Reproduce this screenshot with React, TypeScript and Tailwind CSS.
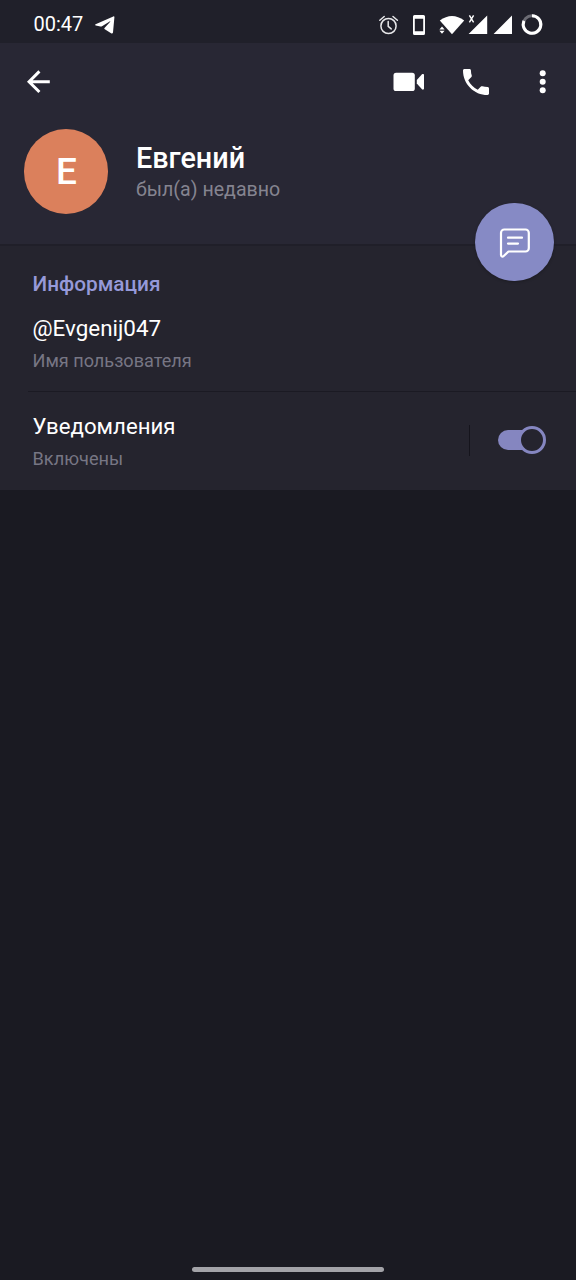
import { useState } from 'react';


/* 
  Icons
*/
function StatusIcons() {
  return (
    <svg width="170" height="24" viewBox="376 12 170 24" fill="none" className="block">
      {/* Alarm */}
      <g stroke="#e8e8ea" strokeWidth="1.5" strokeLinecap="round">
        <circle cx="388.5" cy="26" r="7.6" />
        <path d="M388.2 21.5v4.8l3 2.6M379.8 20.2l4.4-3.700M397.4 20.2l-4.4-3.700" />
      </g>

      {/* Phone */}
      <path fill="#fff" fillRule="evenodd" d="M414.500 15h9a1.500 1.500 0 0 1 1.500 1.500v17a1.500 1.500 0 0 1-1.500 1.500h-9a1.500 1.500 0 0 1-1.500-1.500v-17a1.500 1.500 0 0 1 1.500-1.500zM414.800 18.700v12.600h8.400V18.700z" />

      {/* Wifi */}
      <path fill="#fff" d="M439.800 20.600Q452 11.500 464.200 20.600L452 34.300z" />
      <path fill="#fff" stroke="#20202a" strokeWidth="1" paintOrder="stroke" d="M439.400 29.500l2.600-3 2.600 3zM439.400 30.800l2.600 3 2.600-3z" />

      {/* Signal */}
      <path stroke="#fff" strokeWidth="1.400" d="M469.400 15.300l4.200 7M473.600 15.300l-4.200 7" />
      <path fill="#fff" d="M487.200 15.500V34H468.600zM512 15.500V34H493.600z" />

      {/* Battery */}
      <circle cx="532" cy="24.500" r="8.800" stroke="#6c6c74" strokeWidth="3" />
      <path stroke="#fff" strokeWidth="3" d="M532 15.700A8.800 8.800 0 1 1 524 20.900" />
    </svg>
  )
}

function PlaneIcon() {
  return (
    <svg width="20" height="18" viewBox="0 0 20 18" fill="#fff" className="block mt-px">
      <path d="M.6 8.200 18.300.4c.7-.3 1.200.1 1.100.9L18 16.400c-.2 1.100-1 1.500-1.900.9l-6.300-4c-.7-.5-.7-1-.1-1.600l5.500-6c.3-.4-.1-.6-.5-.3L7 10.200c-.5.300-1 .4-1.600.2L.8 9.500c-.8-.3-.9-.9-.2-1.300z" />
    </svg>
  )
}

function BackIcon() {
  return (
    <svg width="24" height="24" viewBox="0 0 24 24" fill="none" stroke="#fff" strokeWidth="3" className="block">
      <path d="M23.800 11.700H3.100M13.400 1.400 3.100 11.700l10.300 10.300" />
    </svg>
  )
}

function VideoIcon() {
  return (
    <svg width="32" height="20" viewBox="0 0 32 20" fill="#fff" className="block">
      <rect x=".5" y=".8" width="21.300" height="18.200" rx="2.600" />
      <path d="M23.800 8 29 2.300c.7-.7 2-.4 2 .7v13.600c0 1.100-1.300 1.400-2 .7l-5.200-5.700z" />
    </svg>
  )
}

function PhoneIcon() {
  return (
    <svg width="26" height="26" viewBox="3 3 18 18" fill="#fff" className="block">
      <path d="M6.620 10.790c1.440 2.830 3.760 5.140 6.590 6.590l2.200-2.200c.27-.27.67-.36 1.020-.24 1.120.37 2.330.57 3.570.57.55 0 1 .45 1 1V20c0 .55-.45 1-1 1-9.390 0-17-7.610-17-17 0-.55.45-1 1-1h3.500c.55 0 1 .45 1 1 0 1.250.2 2.450.57 3.570.11.35.03.74-.25 1.020z" />
    </svg>
  )
}

function DotsIcon() {
  return (
    <svg width="8" height="26" viewBox="0 0 8 26" fill="#fff" className="block">
      <circle cx="3.700" cy="4.300" r="3" />
      <circle cx="3.700" cy="12.800" r="3" />
      <circle cx="3.700" cy="21.300" r="3" />
    </svg>
  )
}

function MessageIcon() {
  return (
    <svg width="32" height="32" viewBox="0 0 32 32" fill="none" stroke="#fff" strokeWidth="2.2" strokeLinecap="round" strokeLinejoin="round" className="block ml-[2px]">
      <path d="M5.300 3.500h21.200a3.300 3.300 0 0 1 3.300 3.300v15.400a3.300 3.300 0 0 1-3.300 3.300H9.500l-4.800 4.500c-1.100 1-2.700.6-2.700-.9V6.800a3.300 3.300 0 0 1 3.300-3.300z" />
      <path d="M9 11.700h14M9 17.600h10" />
    </svg>
  )
}


export default function App() {

  const [enabled, setEnabled] = useState(true);

  return (
    <main className="flex flex-col w-full h-[1280px] overflow-hidden bg-[#1a1a22] font-[Roboto,sans-serif] text-white">

      {/* Status bar */}
      <div className="flex items-center h-[43px] pl-[33.5px] pr-[30px] pb-px pt-[6px] shrink-0 bg-[#20202a]">
        <span className="text-[20px] leading-6 w-[61.5px] whitespace-nowrap">00:47</span>
        <PlaneIcon />
        <div className="ml-auto">
          <StatusIcons />
        </div>
      </div>


      {/* Header */}
      <header className="relative h-[201px] shrink-0 bg-[#282734]">

        <div className="flex items-center h-[77px] pl-[26px] pr-[29px]">
          <button className="mr-auto"><BackIcon /></button>
          <button className="mr-[38px]"><VideoIcon /></button>
          <button className="mr-[50px]"><PhoneIcon /></button>
          <button><DotsIcon /></button>
        </div>

        <div className="flex pl-[23.7px] pt-[9.4px]">
          <div className="flex items-center justify-center size-[84.6px] pl-px rounded-full bg-[#db805c] text-[37px] font-medium">
            Е
          </div>
          <div className="flex flex-col pl-[27.7px] pt-[12.6px]">
            <h1 className="text-[28.8px] leading-8 font-medium whitespace-nowrap">Евгений</h1>
            <span className="text-[19.6px] leading-6 pt-[4px] text-[#858490] whitespace-nowrap">был(а) недавно</span>
          </div>
        </div>

        {/* Message button, sits on the header edge */}
        <button className="absolute right-[22.3px] -bottom-[37.3px] flex items-center justify-center size-[78.6px] rounded-full bg-[#868ac5] shadow-[0_1px_3px_rgba(0,0,0,0.25)]">
          <MessageIcon />
        </button>
      </header>


      {/* Info */}
      <section className="flex flex-col h-[245.5px] shrink-0 bg-[#25242e] border-t-2 border-[#201f29]">
        <div className="flex flex-col h-[145px] pl-[32.5px] pt-[26px]">
          <h2 className="text-[20.8px] leading-6 font-medium text-[#9699d9]">Информация</h2>
          <span className="text-[22.4px] leading-7 mt-[18px]">@Evgenij047</span>
          <span className="text-[18.1px] leading-6 mt-[7px] text-[#777684]">Имя пользователя</span>
        </div>

        <div className="ml-7 h-px bg-[#1b1a23]" />

        {/* Notifications */}
        <div className="flex items-start grow pt-[20px] pl-[32.5px] pr-[30px]">
          <div className="flex flex-col mr-auto">
            <span className="text-[22.2px] leading-7">Уведомления</span>
            <span className="text-[18.2px] leading-6 mt-[7px] text-[#777684]">Включены</span>
          </div>
          <div className="w-px h-[31px] mt-[13px] mr-7 bg-[#15141c]" />
          <button
            className="flex items-center w-12 h-7 mt-[14px]"
            onClick={() => setEnabled(!enabled)}
          >
            <span className="w-[34px] h-5 rounded-l-full bg-[#8586c0]" />
            <span className="-ml-[14px] size-7 shrink-0 rounded-full border-[3px] border-[#8586c0] bg-[#25242e]" />
          </button>
        </div>
      </section>


      {/* Gesture bar */}
      <div className="mt-auto mx-auto mb-[8.5px] w-48 h-[5px] shrink-0 rounded-full bg-[#a3a3a8]" />

    </main>
  )
}
